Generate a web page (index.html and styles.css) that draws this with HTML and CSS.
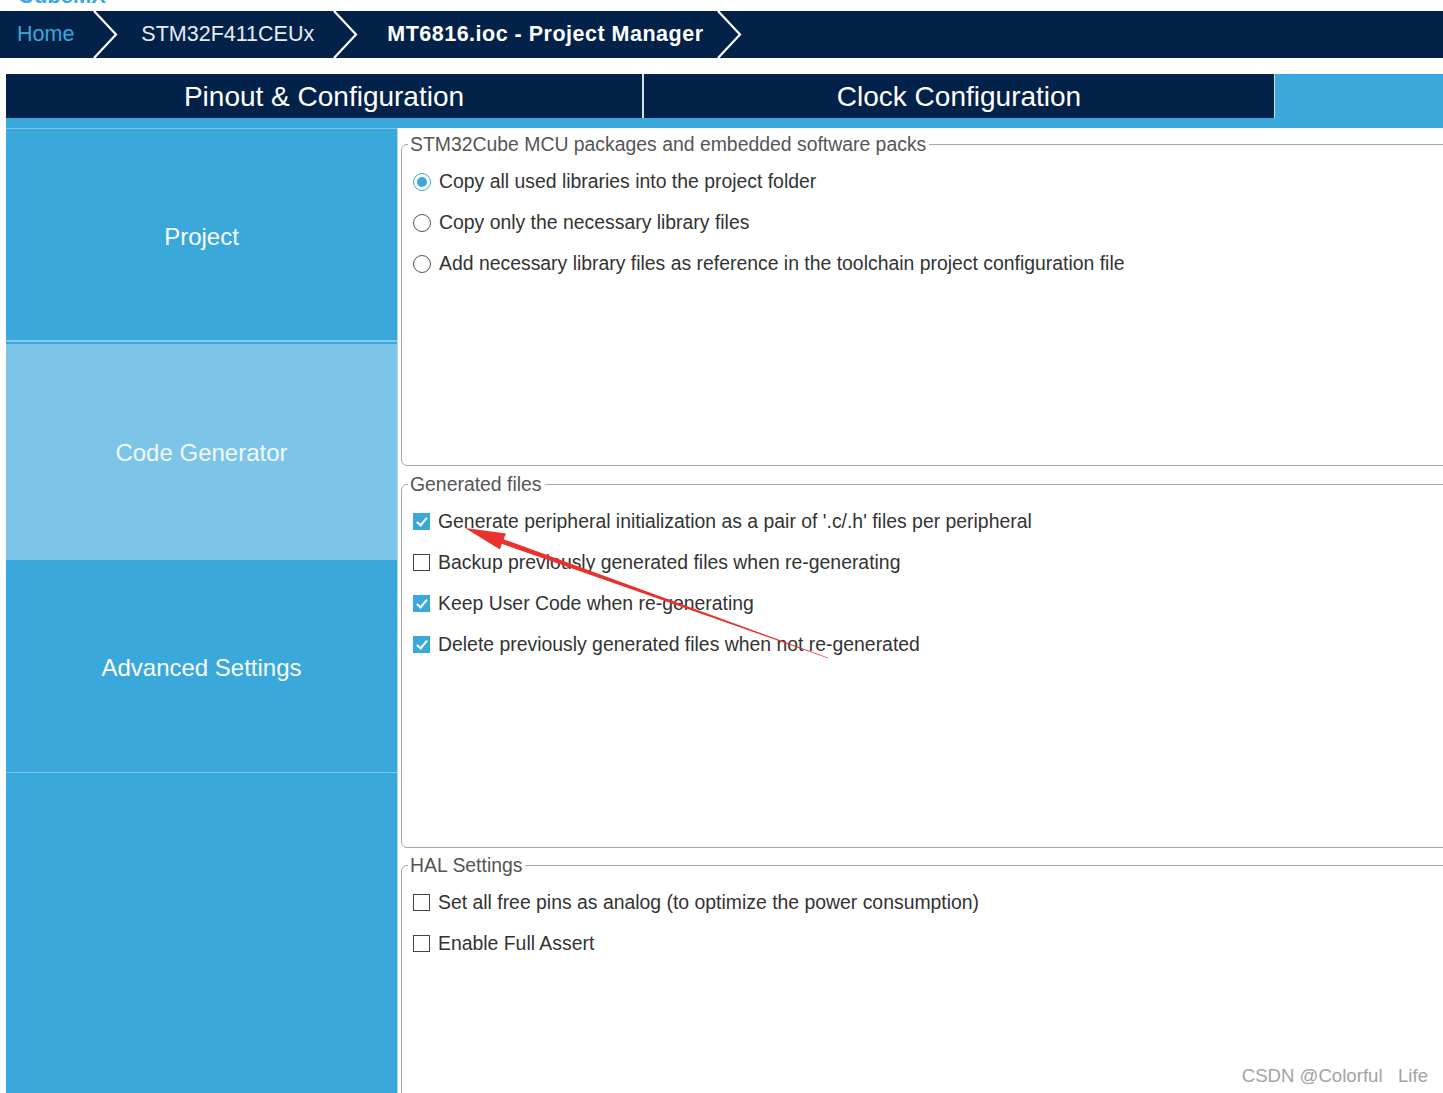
FILE: index.html
```html
<!DOCTYPE html>
<html lang="en">
<head>
    <meta charset="UTF-8">
    <meta name="viewport" content="width=device-width, initial-scale=1.0">
    <title>MT6816.ioc - Project Manager</title>
    <link rel="stylesheet" href="styles.css">
</head>
<body>
    <div class="brand"><span>CubeMX</span></div>

    <nav class="crumbs">
        <span class="crumb home">Home</span>
        <svg class="chev" width="26" height="47" viewBox="0 0 26 47"><polyline points="2,0 24,23.5 2,47" /></svg>
        <span class="crumb">STM32F411CEUx</span>
        <svg class="chev" width="26" height="47" viewBox="0 0 26 47"><polyline points="2,0 24,23.5 2,47" /></svg>
        <span class="crumb current">MT6816.ioc - Project Manager</span>
        <svg class="chev" width="26" height="47" viewBox="0 0 26 47"><polyline points="2,0 24,23.5 2,47" /></svg>
    </nav>

    <div class="tabs">
        <div class="tab">Pinout &amp; Configuration</div>
        <div class="tab second">Clock Configuration</div>
    </div>

    <div class="main">
        <aside class="sidebar">
            <div class="nav-item">Project</div>
            <div class="nav-item active">Code Generator</div>
            <div class="nav-item">Advanced Settings</div>
            <div class="nav-rest"></div>
        </aside>

        <section class="content">
            <fieldset class="group packs">
                <legend>STM32Cube MCU packages and embedded software packs</legend>
                <div class="opts">
                    <label class="opt"><input type="radio" name="packs" checked> Copy all used libraries into the project folder</label>
                    <label class="opt"><input type="radio" name="packs"> Copy only the necessary library files</label>
                    <label class="opt"><input type="radio" name="packs"> Add necessary library files as reference in the toolchain project configuration file</label>
                </div>
            </fieldset>

            <fieldset class="group files">
                <legend>Generated files</legend>
                <div class="opts">
                    <label class="opt"><input type="checkbox" checked> Generate peripheral initialization as a pair of '.c/.h' files per peripheral</label>
                    <label class="opt"><input type="checkbox"> Backup previously generated files when re-generating</label>
                    <label class="opt"><input type="checkbox" checked> Keep User Code when re-generating</label>
                    <label class="opt"><input type="checkbox" checked> Delete previously generated files when not re-generated</label>
                </div>
            </fieldset>

            <fieldset class="group hal">
                <legend>HAL Settings</legend>
                <div class="opts">
                    <label class="opt"><input type="checkbox"> Set all free pins as analog (to optimize the power consumption)</label>
                    <label class="opt"><input type="checkbox"> Enable Full Assert</label>
                </div>
            </fieldset>
        </section>
    </div>

    <!-- annotation drawn over the screenshot -->
    <svg class="arrow" width="1443" height="1093" viewBox="0 0 1443 1093">
        <polygon points="465,528 506,533.5 503.6,539.2 828.2,657.8 827.8,658.2 501.8,543.8 500,549.5" />
    </svg>

    <div class="watermark">CSDN @Colorful   Life</div>
</body>
</html>
```

FILE: styles.css
```css
body {
    margin: 0;
    font-family: "Liberation Sans", Arial, sans-serif;
    background-color: white;
    position: relative;
    height: 1093px;
    overflow: hidden;
}
.brand {
    height: 11px;
    overflow: hidden;
    padding-left: 18px;
}
.brand span {
    display: block;
    margin-top: -15px;
    font-size: 22px;
    line-height: 22px;
    font-weight: bold;
    color: #3aa8db;
}
.crumbs {
    display: flex;
    align-items: center;
    height: 47px;
    background: #03224a;
}
.crumb {
    font-size: 21.5px;
    color: #e8ecf2;
    margin-right: 18px;
}
.crumb.home {
    margin-left: 17px;
    color: #3aa8db;
}
.chev + .crumb {
    margin-left: -2px;
}
.chev + .crumb.current {
    margin-left: 4px;
}
.crumb.current {
    font-weight: bold;
    color: white;
    letter-spacing: 0.5px;
    margin-right: 12px;
}
.chev {
    margin-right: 25px;
}
.chev polyline {
    fill: none;
    stroke: white;
    stroke-width: 2.2;
}
.tabs {
    display: flex;
    height: 44px;
    margin: 16px 0 0 6px;
    background: #3aa8db;
}
.tab {
    width: 636px;
    display: flex;
    align-items: center;
    justify-content: center;
    background: #03224a;
    color: white;
    font-size: 28px;
    padding-top: 2px;
    box-sizing: border-box;
}
.tab.second {
    width: 633px;
    border-left: 2px solid #d8dee6;
    border-right: 1px solid #d8dee6;
}
.main {
    display: grid;
    grid-template-columns: 392px 1fr;
    margin-left: 6px;
    padding-top: 10px;
    height: 975px;
    background: #3aa8db;
}
.sidebar {
    display: flex;
    flex-direction: column;
    border-right: 1px solid #a9d9f0;
}
.nav-item {
    display: flex;
    align-items: center;
    justify-content: center;
    height: 212px;
    box-sizing: border-box;
    border-top: 1px solid #7cc4e8;
    padding-top: 4px;
    color: #fbfdff;
    font-size: 24px;
}
.nav-item.active {
    height: 220px;
    border-top: 2px solid #85c9ea;
    box-shadow: inset 0 2px #3aa8db;
    background: #7cc5e8;
    color: #f2f9fd;
}
.nav-item.active + .nav-item {
    border-top: none;
}
.nav-rest {
    flex: 1;
    border-top: 1px solid #7cc4e8;
}
.content {
    background: white;
    overflow: hidden;
    padding-left: 3px;
}
.group {
    box-sizing: border-box;
    margin: 0 -20px 0 0;
    padding: 0 0 0 11px;
    border: 1px solid #a8a8a8;
    border-radius: 6px;
    min-width: 0;
}
.group legend {
    margin-left: -5px;
    padding: 0 3px 0 2px;
    font-size: 19.4px;
    line-height: 22px;
    color: #555;
}
.packs {
    margin-top: 5px;
    height: 333px;
}
.files {
    margin-top: 7px;
    height: 375px;
}
.hal {
    margin-top: 6px;
    height: 400px;
}
.opts {
    padding-top: 6px;
}
.opt {
    display: flex;
    align-items: center;
    gap: 8px;
    height: 41px;
    font-size: 19.4px;
    color: #333;
    white-space: nowrap;
}
.opt input {
    appearance: none;
    margin: 0;
    flex: none;
    position: relative;
    background: white;
}
.opt input[type="radio"] {
    width: 18px;
    height: 18px;
    border: 1px solid #555;
    border-radius: 50%;
}
.opt input[type="radio"]:checked {
    border-color: #3aa8db;
}
.opt input[type="radio"]:checked::after {
    content: "";
    position: absolute;
    left: 3px;
    top: 3px;
    width: 10px;
    height: 10px;
    border-radius: 50%;
    background: #3aa8db;
}
.opt input[type="checkbox"] {
    width: 17px;
    height: 17px;
    border: 1px solid #444;
    box-sizing: border-box;
}
.opt input[type="checkbox"]:checked {
    border-color: #3aa8db;
    background: #3aa8db;
}
.opt input[type="checkbox"]:checked::after {
    content: "";
    position: absolute;
    left: 4.5px;
    top: 1px;
    width: 4px;
    height: 9px;
    border: solid white;
    border-width: 0 2px 2px 0;
    transform: rotate(40deg);
}
.arrow {
    position: absolute;
    top: 0;
    left: 0;
    pointer-events: none;
}
.arrow polygon {
    fill: #e8322e;
}
.watermark {
    position: absolute;
    right: 15px;
    bottom: 6px;
    font-size: 18.6px;
    color: #a3a3a3;
    white-space: pre;
}
```
